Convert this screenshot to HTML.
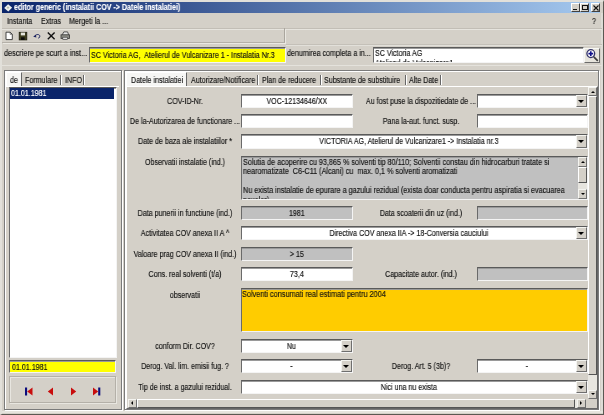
<!DOCTYPE html>
<html><head><meta charset="utf-8"><title>editor generic</title>
<style>
html,body{margin:0;padding:0;}
body{-webkit-text-stroke-width:0.15px;width:604px;height:415px;overflow:hidden;background:#d4d0c8;position:relative;font-family:"Liberation Sans",sans-serif;font-size:8.5px;color:#111;line-height:10px;}
div{position:absolute;box-sizing:border-box;white-space:nowrap;}
.t,.l,span.c,span.cl{will-change:transform;}
.t{transform:scaleX(.835);transform-origin:0 50%;}
span.c{display:block;transform:scaleX(.835);}
span.cl{display:block;transform:scaleX(.835);transform-origin:0 50%;}
.l{text-align:center;height:10px;transform:scaleX(.835);}           /* centred label */
.f{background:#fff;border-top:1px solid #5a5a5a;border-left:1px solid #6a6a6a;border-bottom:1px solid #f4f4f4;border-right:1px solid #f4f4f4;text-align:center;line-height:13px;overflow:hidden;box-shadow:inset 0 1px 0 #9a9a9a;}
.g{background:#c0c0c0;}
.ab,.au,.al,.ar{background:#d4d0c8;border-top:1px solid #f4f4f0;border-left:1px solid #f4f4f0;border-bottom:1px solid #6e6e6e;border-right:1px solid #6e6e6e;}
.ab:after,.au:after,.al:after,.ar:after{content:"";position:absolute;left:50%;top:50%;border:3px solid transparent;}
.ab:after{margin:-1px 0 0 -3px;border-top:3px solid #000;border-bottom:0;}
.au:after{margin:-2px 0 0 -3px;border-bottom:3px solid #000;border-top:0;}
.al:after{margin:-3px 0 0 -2px;border-right:3px solid #000;border-left:0;}
.ar:after{margin:-3px 0 0 -1px;border-left:3px solid #000;border-right:0;}
.s.ab:after{border-width:2px 2px 0 2px;margin:-1px 0 0 -2px;}
.s.au:after{border-width:0 2px 2px 2px;margin:-1px 0 0 -2px;}
.s.al:after{border-width:2px 2px 2px 0;margin:-2px 0 0 -1px;}
.s.ar:after{border-width:2px 0 2px 2px;margin:-2px 0 0 -1px;}
.sep{width:1px;background:#666;box-shadow:1px 0 0 #fff;}
</style></head><body>

<!-- window frame -->
<div style="left:0;top:0;width:604px;height:415px;border-left:2.5px solid #e2e0da;border-top:2px solid #e2e0da;border-right:1px solid #5a5852;border-bottom:1px solid #5a5852;"></div>
<div style="left:2px;top:411px;width:601px;height:2px;background:#e6e4de;"></div>
<div style="left:600.5px;top:13px;width:2px;height:398px;background:#dedcd6;"></div>
<!-- title bar -->
<div style="left:2px;top:2.2px;width:598px;height:10.6px;background:linear-gradient(90deg,#0a246a 0%,#a6caf0 100%);"></div>
<svg style="position:absolute;left:3.8px;top:4.4px" width="8.2" height="7.6" viewBox="0 0 9 9" preserveAspectRatio="none"><path d="M4.5 0.3L8.8 4.3L4.7 8.8L0.2 4.6Z" fill="#eef0ee"/><path d="M4.3 2.6L6 4.2L4.4 5.8L2.8 4.4Z" fill="#b4bcac"/></svg>
<div class="t" style="left:14px;top:2px;height:11px;line-height:11px;color:#fff;font-weight:bold;">editor generic (instalatii COV -&gt; Datele instalatiei)</div>
<!-- window buttons -->
<div style="left:571px;top:3px;width:9px;height:9px;background:#d4d0c8;border-top:1px solid #fff;border-left:1px solid #fff;border-right:1px solid #404040;border-bottom:1px solid #404040;"><div style="left:1px;top:4.6px;width:4px;height:1.2px;background:#111"></div></div>
<div style="left:580px;top:3px;width:9px;height:9px;background:#d4d0c8;border-top:1px solid #fff;border-left:1px solid #fff;border-right:1px solid #404040;border-bottom:1px solid #404040;"><div style="left:1px;top:0.5px;width:5.5px;height:5.5px;border:1px solid #111;border-top:1.6px solid #111"></div></div>
<div style="left:591px;top:3px;width:9px;height:9px;background:#d4d0c8;border-top:1px solid #fff;border-left:1px solid #fff;border-right:1px solid #404040;border-bottom:1px solid #404040;"><svg style="position:absolute;left:1px;top:1px" width="6" height="6" viewBox="0 0 6 6"><path d="M0.5 0.5L5.5 5.5M5.5 0.5L0.5 5.5" stroke="#111" stroke-width="1.1"/></svg></div>

<!-- menu bar -->
<div class="t" style="left:7px;top:16px;">Instanta</div>
<div class="t" style="left:41px;top:16px;">Extras</div>
<div class="t" style="left:69px;top:16px;">Mergeti la ...</div>
<div class="t" style="left:592px;top:16px;">?</div>

<!-- toolbar -->
<div style="left:2px;top:27.5px;width:600px;height:1px;background:#c2beb6;box-shadow:0 1px 0 #e6e4de"></div>
<div style="left:2px;top:28px;width:282.5px;height:15px;border-right:1px solid #aaa69e;border-bottom:1px solid #b4b0a8;box-shadow:1px 1px 0 #eae8e2"></div>
<div style="left:286px;top:44px;width:316px;height:1px;background:#c4c0b8;box-shadow:0 1px 0 #e2e0da"></div>
<svg style="position:absolute;left:5px;top:31px" width="70" height="11" viewBox="0 0 70 11">
 <path d="M1 1.2H5.2L7.3 3.3V8.6H1Z" fill="#fff" stroke="#333" stroke-width="0.9"/><path d="M5.2 1.2V3.3H7.3" fill="none" stroke="#333" stroke-width="0.6"/>
 <rect x="14.2" y="1.3" width="7.6" height="7.6" fill="#3c3c1c" stroke="#1c1c0c" stroke-width="0.8"/><rect x="15.8" y="1.6" width="4.2" height="2.8" fill="#e4e4dc"/><rect x="16" y="6.3" width="3.6" height="2.6" fill="#0c0c0c"/>
 <path d="M30.2 5C31 3 34.8 3 34.8 5.2C34.8 6.4 34.2 7 33.2 7" fill="none" stroke="#1c2460" stroke-width="1"/><path d="M28.2 5.8L30.8 3.4L31.4 6.4Z" fill="#1c2460"/>
 <path d="M42.8 1.6L49.6 8.2M49.6 1.6L42.8 8.2" stroke="#111" stroke-width="1.4"/>
 <path d="M57.2 3.8L58.8 0.9H62.6L63.6 3.8" fill="#e6e6e6" stroke="#333" stroke-width="0.8"/><rect x="56" y="3.8" width="8.4" height="3.6" fill="#8c8c84" stroke="#333" stroke-width="0.8"/><rect x="57.8" y="6.2" width="4.8" height="2.2" fill="#ddd" stroke="#333" stroke-width="0.6"/>
</svg>

<!-- top row -->
<div class="t" style="left:4px;top:48px;transform:scaleX(.855)">descriere pe scurt a inst...</div>
<div class="f" style="left:88.5px;top:47px;width:197px;height:16.3px;background:#ffff00;text-align:left;line-height:14px;padding-left:1px;"><span class="cl" style="transform:scaleX(.84)">SC Victoria AG,&nbsp; Atelierul de Vulcanizare 1 - Instalatia Nr.3</span></div>
<div class="t" style="left:287px;top:48px;">denumirea completa a in...</div>
<div class="f" style="left:373px;top:47px;width:211px;height:16px;text-align:left;padding:0 0 0 1px;line-height:10px;"><span class="cl">SC Victoria AG<br>Atelierul de Vulcanizare1</span></div>
<div style="left:584px;top:48px;width:15.5px;height:14.5px;background:#e6e4dc;border-top:1px solid #f8f8f4;border-left:1px solid #f8f8f4;border-right:1px solid #6a6a6a;border-bottom:1px solid #6a6a6a;">
 <svg style="position:absolute;left:0;top:0" width="14" height="13" viewBox="0 0 14 13"><circle cx="5.8" cy="4.6" r="3.9" fill="#fff" stroke="#34346a" stroke-width="1.3"/><path d="M3.4 4.6H8.2M5.8 2.2V7" stroke="#10108a" stroke-width="1.6"/><path d="M8.8 7.8L12.8 11.8" stroke="#3c3c3c" stroke-width="1.7"/></svg>
</div>
<div style="left:2px;top:64.5px;width:600px;height:1px;background:#e4e2dc"></div>

<!-- left panel -->
<div style="left:3.5px;top:70px;width:118px;height:340px;border:1px solid #7a7a7a;box-shadow:inset 1px 1px 0 #fff,1px 1px 0 #fff;"></div>
<div style="left:5.5px;top:72px;width:16.5px;height:15px;background:#f6f6f4;border-top:1px solid #fff;border-left:1px solid #fff;border-right:1px solid #666;"></div>
<div class="t" style="left:9.5px;top:75px;">de</div>
<div class="t" style="left:24.5px;top:75px;">Formulare</div>
<div class="sep" style="left:60px;top:75px;height:10px;"></div>
<div class="t" style="left:64.5px;top:75px;">INFO</div>
<div class="sep" style="left:83px;top:75px;height:10px;"></div>
<div style="left:7px;top:86px;width:112px;height:1px;background:#fff"></div>
<div class="f" style="left:9px;top:87px;width:108px;height:271px;"></div>
<div style="left:10px;top:88px;width:104px;height:10.5px;background:#0a246a;color:#fff;line-height:10.5px;padding-left:1px;"><span class="cl">01.01.1981</span></div>
<div class="f" style="left:9px;top:360px;width:107px;height:13px;background:#ffff00;text-align:left;padding-left:2px;"><span class="cl">01.01.1981</span></div>
<div style="left:9px;top:376px;width:107px;height:27px;border:1px solid #b4b0a8;box-shadow:inset 1px 1px 0 #e8e6e0,1px 1px 0 #e8e6e0;"></div>
<svg style="position:absolute;left:24px;top:387px" width="80" height="9" viewBox="0 0 80 9">
 <rect x="1" y="0.5" width="2.1" height="8" fill="#0c0c7c"/><path d="M8.5 0.5V8.5L3.2 4.5Z" fill="#c80c0c"/>
 <path d="M29 0.5V8.5L23.8 4.5Z" fill="#c80c0c"/>
 <path d="M47 0.5V8.5L52.2 4.5Z" fill="#c80c0c"/>
 <path d="M69 0.5V8.5L74.2 4.5Z" fill="#c80c0c"/><rect x="74.2" y="0.5" width="2.1" height="8" fill="#0c0c7c"/>
</svg>

<!-- right panel -->
<div style="left:123.7px;top:70px;width:475.8px;height:340px;border:1px solid #7a7a7a;box-shadow:inset 1px 1px 0 #fff,1px 1px 0 #fff;"></div>
<div style="left:126px;top:72px;width:61px;height:15px;background:#f6f6f4;border-top:1px solid #fff;border-left:1px solid #fff;border-right:1px solid #666;"></div>
<div class="t" style="left:130.5px;top:75px;">Datele instalatiei</div>
<div class="t" style="left:190.5px;top:75px;">Autorizare/Notificare</div>
<div class="sep" style="left:257px;top:75px;height:10px;"></div>
<div class="t" style="left:261.5px;top:75px;">Plan de reducere</div>
<div class="sep" style="left:320px;top:75px;height:10px;"></div>
<div class="t" style="left:324px;top:75px;">Substante de substituire</div>
<div class="sep" style="left:404.5px;top:75px;height:10px;"></div>
<div class="t" style="left:409px;top:75px;">Alte Date</div>
<div class="sep" style="left:440px;top:75px;height:10px;"></div>
<div style="left:126px;top:86px;width:472px;height:323px;border-top:1px solid #fff;border-left:1px solid #fff;border-right:1px solid #666;border-bottom:1px solid #666;"></div>

<!-- form rows -->
<div class="l" style="left:105px;width:160px;top:95.8px;">COV-ID-Nr.</div>
<div class="f" style="left:241px;top:93.8px;width:111.7px;height:14.2px;"><span class="c">VOC-12134646/XX</span></div>
<div class="l" style="left:341px;width:160px;top:95.8px;">Au fost puse la dispozitiedate de ...</div>
<div class="f" style="left:477px;top:93.8px;width:110.7px;height:14.2px;"><div class="ab" style="right:0;top:0;bottom:0;width:11px;"></div></div>

<div class="l" style="left:105px;width:160px;top:116.3px;">De la-Autorizarea de functionare ...</div>
<div class="f" style="left:241px;top:114.3px;width:111.7px;height:14.2px;"></div>
<div class="l" style="left:341px;width:160px;top:116.3px;">Pana la-aut. funct. susp.</div>
<div class="f" style="left:477px;top:114.3px;width:110.7px;height:14.2px;"></div>

<div class="l" style="left:105px;width:160px;top:136.4px;">Date de baza ale instalatiilor *</div>
<div class="f" style="left:241px;top:134.4px;width:346.7px;height:14.2px;padding-right:11px;"><span class="c">VICTORIA AG, Atelierul de Vulcanizare1 -&gt; Instalatia nr.3</span><div class="ab" style="right:0;top:0;bottom:0;width:11px;"></div></div>

<div class="l" style="left:105px;width:160px;top:156.8px;">Observatii instalatie (ind.)</div>
<div class="f g" style="left:241px;top:155.8px;width:347.4px;height:44px;text-align:left;padding:1.5px 0 0 1px;line-height:9.4px;"><span class="cl" style="transform:scaleX(.85)">Solutia de acoperire cu 93,865 % solventi tip 80/110; Solventii constau din hidrocarburi tratate si<br>nearomatizate&nbsp; C6-C11 (Alcani) cu&nbsp; max. 0,1 % solventi aromatizati<br><br>Nu exista instalatie de epurare a gazului rezidual (exista doar conducta pentru aspiratia si evacuarea<br>noxelor)</span>
 <div style="right:0;top:0;width:9.5px;height:42px;background:#e6e4de;"></div>
 <div class="au s" style="right:0;top:0;width:9.5px;height:10px;"></div>
 <div style="right:0;top:10px;width:9.5px;height:16.5px;background:#d4d0c8;border-top:1px solid #fff;border-left:1px solid #fff;border-bottom:1px solid #555;border-right:1px solid #555;"></div>
 <div class="ab s" style="right:0;bottom:0;width:9.5px;height:10px;"></div>
</div>

<div class="l" style="left:105px;width:160px;top:207.7px;">Data punerii in functiune (ind.)</div>
<div class="f g" style="left:241px;top:205.7px;width:111.7px;height:14.2px;"><span class="c">1981</span></div>
<div class="l" style="left:341px;width:160px;top:207.7px;">Data scoaterii din uz (ind.)</div>
<div class="f g" style="left:477px;top:205.7px;width:110.7px;height:14.2px;"></div>

<div class="l" style="left:105px;width:160px;top:228.2px;">Activitatea COV anexa II A ^</div>
<div class="f" style="left:241px;top:226.2px;width:346.7px;height:14.2px;padding-right:11px;"><span class="c">Directiva COV anexa IIA -&gt; 18-Conversia cauciului</span><div class="ab" style="right:0;top:0;bottom:0;width:11px;"></div></div>

<div class="l" style="left:105px;width:160px;top:248.7px;">Valoare prag COV anexa II (ind.)</div>
<div class="f g" style="left:241px;top:246.7px;width:111.7px;height:14.2px;"><span class="c">&gt; 15</span></div>

<div class="l" style="left:105px;width:160px;top:269.2px;">Cons. real solventi (t/a)</div>
<div class="f" style="left:241px;top:267.2px;width:111.7px;height:14.2px;"><span class="c">73,4</span></div>
<div class="l" style="left:341px;width:160px;top:269.2px;">Capacitate autor. (ind.)</div>
<div class="f g" style="left:477px;top:267.2px;width:110.7px;height:14.2px;"></div>

<div class="l" style="left:105px;width:160px;top:290.2px;">observatii</div>
<div class="f" style="left:241px;top:287.7px;width:346.7px;height:44px;background:#ffcc00;text-align:left;padding:0;line-height:10px;"><span class="cl" style="transform:scaleX(.86)">Solventi consumati real estimati pentru 2004</span></div>

<div class="l" style="left:105px;width:160px;top:340.8px;">conform Dir. COV?</div>
<div class="f" style="left:241px;top:338.8px;width:111.7px;height:14.2px;padding-right:11px;"><span class="c">Nu</span><div class="ab" style="right:0;top:0;bottom:0;width:11px;"></div></div>

<div class="l" style="left:105px;width:160px;top:361.2px;">Derog. Val. lim. emisii fug. ?</div>
<div class="f" style="left:241px;top:359.2px;width:111.7px;height:14.2px;padding-right:11px;"><span class="c">-</span><div class="ab" style="right:0;top:0;bottom:0;width:11px;"></div></div>
<div class="l" style="left:341px;width:160px;top:361.2px;">Derog. Art. 5 (3b)?</div>
<div class="f" style="left:477px;top:359.2px;width:110.7px;height:14.2px;padding-right:11px;"><span class="c">-</span><div class="ab" style="right:0;top:0;bottom:0;width:11px;"></div></div>

<div class="l" style="left:105px;width:160px;top:381.7px;">Tip de inst. a gazului rezidual.</div>
<div class="f" style="left:241px;top:379.7px;width:346.7px;height:14.2px;padding-right:11px;"><span class="c">Nici una nu exista</span><div class="ab" style="right:0;top:0;bottom:0;width:11px;"></div></div>

<!-- vertical scrollbar -->
<div style="left:588px;top:87px;width:9px;height:311px;background:#e8e6e0;"></div>
<div class="au s" style="left:588px;top:87px;width:9px;height:9px;"></div>
<div style="left:588px;top:96px;width:9px;height:278.5px;background:#d4d0c8;border-top:1px solid #fff;border-left:1px solid #fff;border-bottom:1px solid #555;border-right:1px solid #555;"></div>
<div class="ab s" style="left:588px;top:390px;width:9px;height:8.5px;"></div>
<!-- horizontal scrollbar -->
<div style="left:128px;top:399px;width:458px;height:8.5px;background:#e8e6e0;"></div>
<div class="al s" style="left:128px;top:399px;width:8.5px;height:8.5px;"></div>
<div style="left:136.5px;top:399px;width:438px;height:8.5px;background:#d4d0c8;border-top:1px solid #fff;border-left:1px solid #fff;border-bottom:1px solid #555;border-right:1px solid #555;"></div>
<div class="ar s" style="left:576.5px;top:399px;width:9px;height:8.5px;"></div>

</body></html>
